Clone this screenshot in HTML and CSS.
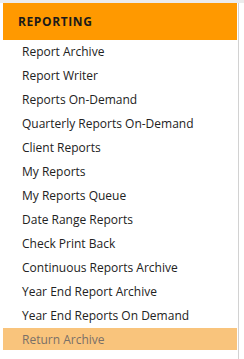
FILE: index.html
```html
<!DOCTYPE html>
<html>
<head>
<meta charset="utf-8">
<link rel="stylesheet" href="styles.css">
</head>
<body>
<div class="page">
  <nav class="sidebar">
    <div class="header">REPORTING</div>
    <ul class="menu">
      <li class="item">Report Archive</li>
      <li class="item">Report Writer</li>
      <li class="item">Reports On-Demand</li>
      <li class="item">Quarterly Reports On-Demand</li>
      <li class="item">Client Reports</li>
      <li class="item">My Reports</li>
      <li class="item">My Reports Queue</li>
      <li class="item">Date Range Reports</li>
      <li class="item">Check Print Back</li>
      <li class="item">Continuous Reports Archive</li>
      <li class="item">Year End Report Archive</li>
      <li class="item">Year End Reports On Demand</li>
      <li class="item active">Return Archive</li>
    </ul>
  </nav>
  <div class="gap"></div>
  <div class="rule"></div>
</div>
</body>
</html>
```

FILE: styles.css
```css
html, body {
  margin: 0;
  padding: 0;
  background: #ffffff;
  font-family: "Open Sans", "Liberation Sans", sans-serif;
}
.page {
  display: flex;
  height: 356px;
  border-top: 3px solid #ececec;
}
.sidebar {
  margin-left: 3px;
  width: 234px;
}
.gap {
  width: 1px;
}
.rule {
  width: 1px;
  background: #d2d2d2;
}
.header {
  height: 37px;
  line-height: 37px;
  background: #ff9900;
  color: #1a1a1a;
  font-weight: 700;
  font-size: 12px;
  letter-spacing: 0.6px;
  padding-left: 15px;
}
.menu {
  list-style: none;
  margin: 0;
  padding: 0;
}
.item {
  height: 22px;
  line-height: 24px;
  margin-bottom: 2px;
  padding-left: 19px;
  font-size: 12px;
  color: #222222;
  white-space: nowrap;
}
.item.active {
  background: #f9c47c;
  color: #7a7068;
}
```
